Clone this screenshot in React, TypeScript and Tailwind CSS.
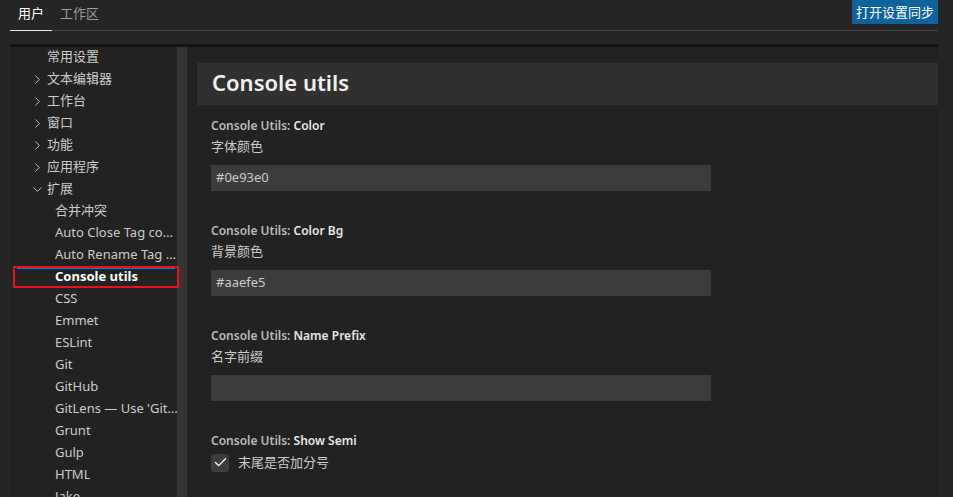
import { Check, ChevronRight, ChevronDown } from "lucide-react"

type TreeItem = {
    label: string;
    level: number;
    chevron?: "right" | "down";
    selected?: boolean;
}

const tree: TreeItem[] = [
    { label: "常用设置", level: 0 },
    { label: "文本编辑器", level: 0, chevron: "right" },
    { label: "工作台", level: 0, chevron: "right" },
    { label: "窗口", level: 0, chevron: "right" },
    { label: "功能", level: 0, chevron: "right" },
    { label: "应用程序", level: 0, chevron: "right" },
    { label: "扩展", level: 0, chevron: "down" },
    { label: "合并冲突", level: 1 },
    { label: "Auto Close Tag configuration", level: 1 },
    { label: "Auto Rename Tag configuration", level: 1 },
    { label: "Console utils", level: 1, selected: true },
    { label: "CSS", level: 1 },
    { label: "Emmet", level: 1 },
    { label: "ESLint", level: 1 },
    { label: "Git", level: 1 },
    { label: "GitHub", level: 1 },
    { label: "GitLens — Use 'GitLens: Show Settings'", level: 1 },
    { label: "Grunt", level: 1 },
    { label: "Gulp", level: 1 },
    { label: "HTML", level: 1 },
    { label: "Jake", level: 1 },
]

const textSettings = [
    { key: "Color", desc: "字体颜色", value: "#0e93e0" },
    { key: "Color Bg", desc: "背景颜色", value: "#aaefe5" },
    { key: "Name Prefix", desc: "名字前缀", value: "" },
]

const font = { fontFamily: '"Noto Sans", "Noto Sans CJK SC", sans-serif' }

const TreeRow = ({ item }: { item: TreeItem }) => {
    if (item.selected) {
        return (
            <div className="relative h-[22px] ml-[3px] w-[166px] border-2 border-[#e81123] flex items-center pl-[40px]">
                <div className="absolute left-[2px] right-[2px] top-0 h-[1px] bg-[#007fd4]" />
                <span className="font-bold text-white whitespace-nowrap">{item.label}</span>
            </div>
        )
    }
    if (item.level === 0) {
        return (
            <div className="h-[22px] flex items-center pl-[20px]">
                <span className="w-[17px] shrink-0 flex items-center text-[#c5c5c5]">
                    {item.chevron === "right" && <ChevronRight size={15} strokeWidth={1.5} />}
                    {item.chevron === "down" && <ChevronDown size={15} strokeWidth={1.5} />}
                </span>
                <span className="whitespace-nowrap">{item.label}</span>
            </div>
        )
    }
    return (
        <div className="h-[22px] flex items-center pl-[45px] w-[168px]">
            <span className="whitespace-nowrap overflow-hidden text-ellipsis">{item.label}</span>
        </div>
    )
}

const App = () => {
    return (
        <div style={font} className="w-[953px] h-[497px] bg-[#252526] overflow-hidden flex text-[13px] text-[#cccccc]">
            <div className="w-[938px] flex flex-col">
                {/* top tabs */}
                <div className="h-[44px] pl-[10px]">
                    <div className="flex items-start justify-between border-b border-[#444444] h-[31px]">
                        <div className="flex items-end h-[30px]">
                            <div className="w-[42px] h-[30px] flex items-center justify-center text-white border-b-[1px] border-[#e7e7e7] -mb-[1px] pb-[3px]">用户</div>
                            <div className="ml-[8px] h-[30px] flex items-center text-[#9d9d9d] pb-[3px]">工作区</div>
                        </div>
                        <button className="h-[24px] px-[4px] bg-[#0e639c] text-white text-[13px] leading-[24px]">打开设置同步</button>
                    </div>
                </div>
                {/* shadow line */}
                <div className="ml-[10px] h-[3px] bg-[#141414]" />

                {/* body */}
                <div className="flex flex-1 ml-[10px] bg-[#222222] min-h-0">
                    {/* tree */}
                    <div className="relative w-[167px] shrink-0">
                        <div className="absolute right-[-10px] top-0 bottom-0 w-[10px] bg-[#343434]" />
                        <div className="relative z-10 -mt-[1px]">
                            {tree.map((item) => (
                                <TreeRow key={item.label} item={item} />
                            ))}
                        </div>
                    </div>

                    {/* settings */}
                    <div className="flex-1 pl-[20px] pt-[16px]">
                        <div className="h-[42px] bg-[#303030] flex items-center pl-[15px] pb-[4px]">
                            <h1 className="text-[22px] font-semibold text-[#f0f0f0] leading-none">Console utils</h1>
                        </div>

                        <div className="pl-[14px] pt-[12px]">
                            {textSettings.map((s) => (
                                <div key={s.key} className="h-[105px]">
                                    <div className="h-[18px] leading-[18px] text-[12px] font-semibold">
                                        <span className="text-[#bbbbbb]">Console Utils: </span>
                                        <span className="text-[#e7e7e7]">{s.key}</span>
                                    </div>
                                    <div className="h-[21px] leading-[21px] mt-[1px]">{s.desc}</div>
                                    <div className="mt-[8px] w-[500px] h-[26px] bg-[#3c3c3c] flex items-center pl-[5px] text-[#cccccc]">
                                        {s.value}
                                    </div>
                                </div>
                            ))}
                            <div>
                                <div className="h-[18px] leading-[18px] text-[12px] font-semibold">
                                    <span className="text-[#bbbbbb]">Console Utils: </span>
                                    <span className="text-[#e7e7e7]">Show Semi</span>
                                </div>
                                <div className="flex items-center mt-[3px]">
                                    <div className="w-[18px] h-[18px] rounded-[3px] bg-[#3c3c3c] flex items-center justify-center text-white">
                                        <Check size={15} strokeWidth={2} />
                                    </div>
                                    <span className="ml-[9px]">末尾是否加分号</span>
                                </div>
                            </div>
                        </div>
                    </div>
                </div>
            </div>
        </div>
    )
}

export default App
